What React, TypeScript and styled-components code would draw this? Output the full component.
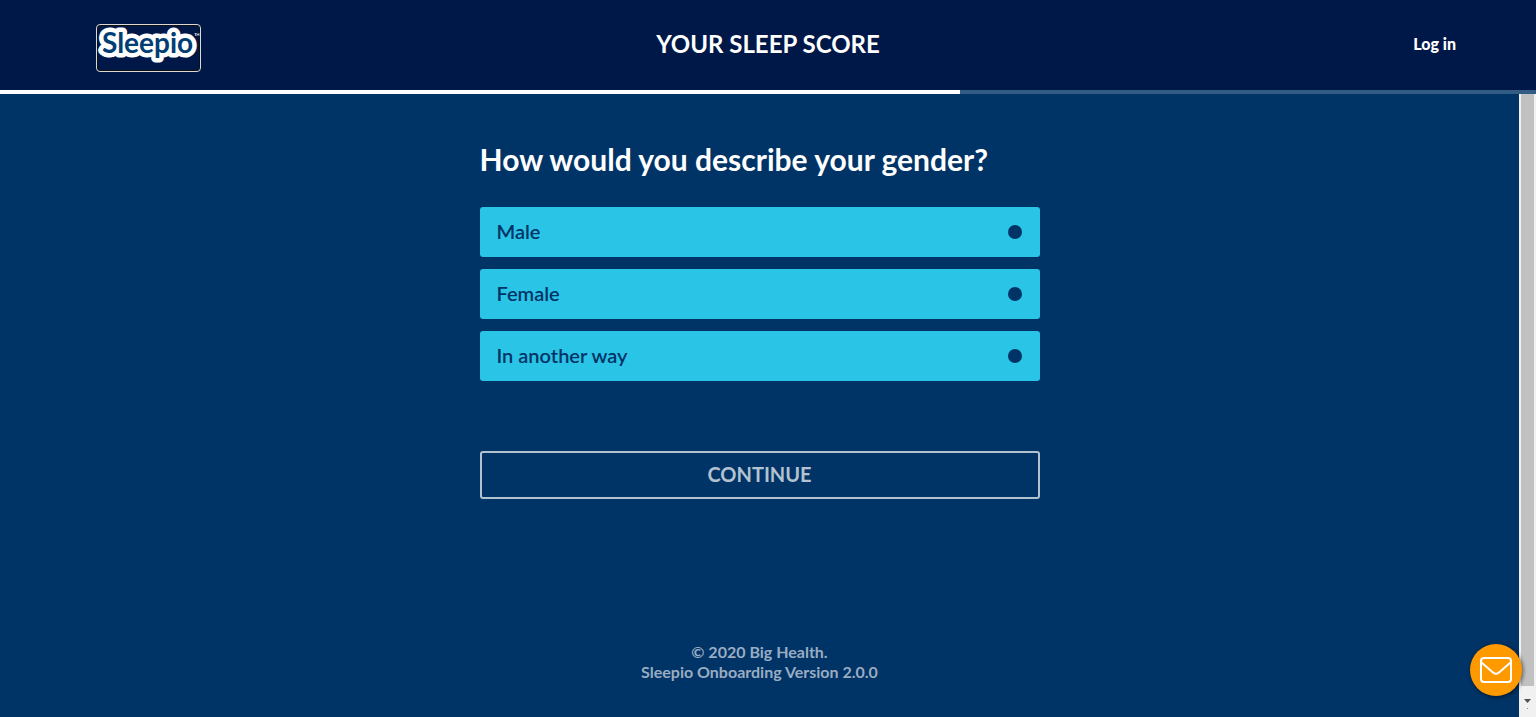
import React from "react";
import styled, { createGlobalStyle } from "styled-components";

const sans = `Lato, "Open Sans", sans-serif`;

const GlobalStyle = createGlobalStyle`
  *, *::before, *::after { box-sizing: border-box; }
  body { margin: 0; background: #003366; font-family: ${sans}; color: #fff; }
`;

const Page = styled.div`
  display: flex;
  flex-direction: column;
  min-height: 100vh;
`;

const Header = styled.header`
  display: grid;
  grid-template-columns: 1fr auto 1fr;
  align-items: center;
  height: 90px;
  padding: 0 80px 0 96px;
  background: #001848;
`;

const LogoLink = styled.a`
  display: block;
  justify-self: start;
  width: 105px;
  height: 48px;
  margin-top: 6px;
  border: 1px solid #d8d8d8;
  border-radius: 4px;
  box-shadow: inset 0 0 0 1px #101010;

  svg { display: block; overflow: visible; }
`;

const Title = styled.h1`
  margin: 0 0 2px -16px;
  font-size: 24px;
  line-height: 32px;
  font-weight: 700;
`;

const LoginLink = styled.a`
  justify-self: end;
  margin-bottom: 2px;
  font-size: 16px;
  line-height: 24px;
  font-weight: 900;
  color: #fff;
  text-decoration: none;
`;

const Progress = styled.div`
  height: 4px;
  background: #335c85;
`;

const ProgressFill = styled.div`
  height: 100%;
  background: #fff;
`;

const Body = styled.div`
  flex: 1;
  display: flex;
`;

const Content = styled.main`
  flex: 1;
  display: flex;
  flex-direction: column;
  align-items: center;
  padding: 44px 16px 35px;
`;

const Form = styled.form`
  width: 100%;
  max-width: 560px;
`;

const Options = styled.fieldset`
  display: flex;
  flex-direction: column;
  gap: 12px;
  margin: 0;
  padding: 0;
  border: 0;
`;

const Question = styled.legend`
  padding: 0;
  margin-bottom: 27px;
  font-size: 30px;
  line-height: 42px;
  font-weight: 700;
`;

const Option = styled.label`
  display: flex;
  align-items: center;
  justify-content: space-between;
  height: 50px;
  padding: 0 18px 0 17px;
  border-radius: 3px;
  background: #2ac4e6;
  color: #003366;
  font-size: 20px;
  line-height: 28px;
  font-weight: 600;
  cursor: pointer;
`;

const OptionText = styled.span`
  padding-bottom: 2px;
`;

const Radio = styled.input`
  appearance: none;
  width: 14px;
  height: 14px;
  margin: 0;
  border-radius: 50%;
  background: #003366;
`;

const Continue = styled.button`
  display: block;
  width: 100%;
  height: 48px;
  margin-top: 70px;
  padding: 0 0 2px;
  border: 2px solid #b3c2d1;
  border-radius: 3px;
  background: transparent;
  color: #b3c2d1;
  font-family: ${sans};
  font-size: 20px;
  line-height: 28px;
  font-weight: 700;
`;

const Footer = styled.footer`
  margin-top: auto;
  color: #99adc2;
  font-size: 16px;
  line-height: 20px;
  font-weight: 700;
  text-align: center;
`;

const ScrollTrack = styled.div`
  display: flex;
  flex-direction: column;
  width: 17px;
  padding: 0 2px;
  background: #f1f1f1;
`;

const ScrollThumb = styled.div`
  flex: 1;
  background: #c1c1c1;
`;

const ScrollArrow = styled.div`
  display: flex;
  justify-content: center;
  height: 31px;
  padding-top: 13px;
`;

const MailButton = styled.button`
  position: fixed;
  right: 14px;
  bottom: 21px;
  display: flex;
  align-items: center;
  justify-content: center;
  width: 52px;
  height: 52px;
  padding: 0;
  border: 0;
  border-radius: 50%;
  background: #ff9900;
  box-shadow: 1px 1px 4px rgba(0, 0, 0, 0.6);
`;

const genders = ["Male", "Female", "In another way"];

export default function App() {
  return (
    <Page>
      <GlobalStyle />
      <Header>
        <LogoLink href="#" aria-label="Sleepio">
          <svg width="103" height="46" viewBox="0 0 103 46">
            <g fontFamily="Lato, sans-serif" fontWeight="700">
              <text x="5" y="28" fontSize="28" fill="#003e73" stroke="#fff" strokeWidth="9" strokeLinejoin="round" paintOrder="stroke">Sleepio</text>
            </g>
            <path d="M97.500 8.500h2M98.500 8.500v2.500M100 11v-2.500l1 1.500 1-1.500V11" fill="none" stroke="#fff" strokeWidth="0.6" />
          </svg>
        </LogoLink>
        <Title>YOUR SLEEP SCORE</Title>
        <LoginLink href="#">Log in</LoginLink>
      </Header>
      <Progress role="progressbar" aria-label="Progress" aria-valuenow={62.5} aria-valuemin={0} aria-valuemax={100}>
        <ProgressFill style={{ width: "62.5%" }} />
      </Progress>
      <Body>
        <Content>
          <Form>
            <Options>
              <Question>How would you describe your gender?</Question>
              {genders.map((gender) => (
                <Option key={gender}>
                  <OptionText>{gender}</OptionText>
                  <Radio type="radio" name="gender" value={gender} />
                </Option>
              ))}
            </Options>
            <Continue type="button">CONTINUE</Continue>
          </Form>
          <Footer>
            <div>© 2020 Big Health.</div>
            <div>Sleepio Onboarding Version 2.0.0</div>
          </Footer>
        </Content>
        <ScrollTrack aria-hidden="true">
          <ScrollThumb />
          <ScrollArrow>
            <svg width="7" height="10" viewBox="0 0 7 10">
              <path d="M0 0h7L3.500 4z" fill="#505050" />
              <path d="M3 9h1v1H3z" fill="#909090" />
            </svg>
          </ScrollArrow>
        </ScrollTrack>
      </Body>
      <MailButton type="button" aria-label="Contact us">
        <svg width="32" height="26" viewBox="0 0 32 26" fill="none" stroke="#fff" strokeWidth="2" strokeLinejoin="round" strokeLinecap="round">
          <rect x="1" y="1" width="30" height="24" rx="3" />
          <path d="M1.500 5.500L13 15.500Q16 18 19 15.500L30.500 5.500" />
        </svg>
      </MailButton>
    </Page>
  );
}
